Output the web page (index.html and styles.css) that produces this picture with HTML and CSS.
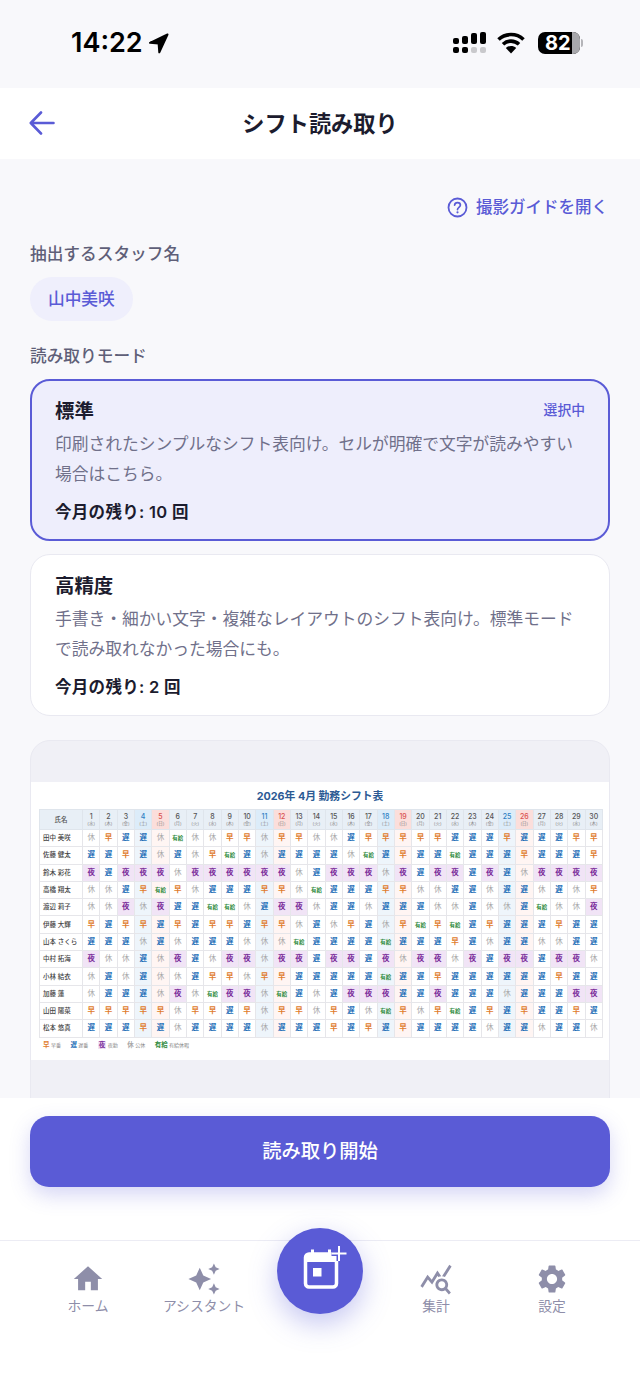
FILE: index.html
```html
<!DOCTYPE html>
<html lang="ja">
<head>
  <meta charset="UTF-8">
  <title>シフト読み取り</title>
  <link rel="stylesheet" href="styles.css">
</head>
<body>
<div class="screen">

  <!-- status bar -->
  <div class="status-bar">
    <div class="clock">14:22
      <svg class="loc" width="21" height="21" viewBox="0 0 21 21"><path d="M19.500 1.500 2 9.800l8.600.6.700 8.900z" fill="#000" stroke="#000" stroke-width="2" stroke-linejoin="round"/></svg>
    </div>
    <div class="status-icons">
      <svg width="34" height="22" viewBox="0 0 34 22">
        <g fill="#000">
          <rect x="0" y="6" width="6" height="6" rx="2"/><rect x="9" y="4" width="6" height="8" rx="2"/><rect x="18" y="1" width="6" height="11" rx="2"/><rect x="27" y="0" width="6" height="12" rx="2"/>
          <rect x="0" y="15" width="6" height="6" rx="2"/><rect x="9" y="15" width="6" height="6" rx="2"/>
        </g>
        <rect x="18" y="15" width="6" height="6" rx="2" fill="#c9c9cc"/><rect x="27" y="15" width="6" height="6" rx="2" fill="#c9c9cc"/>
      </svg>
      <svg class="wifi" width="28" height="22" viewBox="0 0 28 22">
        <path d="M1.500 7.500C8.500.9 19.500.9 26.500 7.500M6 12.300c4.600-4.300 11.400-4.300 16 0" fill="none" stroke="#000" stroke-width="3.600"/>
        <path d="M14 21.500 8.800 15.900c3-2.600 7.400-2.600 10.400 0z" fill="#000"/>
      </svg>
      <div class="battery"><span class="battery-num">82</span><i class="battery-rest"></i></div>
      <i class="battery-tip"></i>
    </div>
  </div>

  <!-- header -->
  <header class="top-bar">
    <svg class="back" width="26" height="24" viewBox="0 0 26 24"><path d="M24.500 12H2M12 1.500 1.800 12 12 22.500" fill="none" stroke="#5a5bd6" stroke-width="2.600" stroke-linecap="round" stroke-linejoin="round"/></svg>
    <h1>シフト読み取り</h1>
  </header>

  <main class="content">
    <div class="guide-row">
      <a class="guide-link">
        <svg width="21" height="21" viewBox="0 0 21 21"><circle cx="10.500" cy="10.500" r="9" fill="none" stroke="#5a5bd6" stroke-width="1.800"/><path d="M7.600 8.100c.2-1.600 1.400-2.500 2.900-2.500 1.600 0 2.900 1 2.900 2.500 0 2.300-2.900 2.300-2.900 4.500" fill="none" stroke="#5a5bd6" stroke-width="1.700" stroke-linecap="round"/><circle cx="10.500" cy="15.300" r="1.100" fill="#5a5bd6"/></svg>
        撮影ガイドを開く
      </a>
    </div>

    <div class="section-label">抽出するスタッフ名</div>
    <div class="chip">山中美咲</div>

    <div class="section-label mode-label">読み取りモード</div>

    <div class="mode-card selected">
      <div class="mode-head"><span class="mode-title">標準</span><span class="mode-state">選択中</span></div>
      <p class="mode-desc">印刷されたシンプルなシフト表向け。セルが明確で文字が読みやすい場合はこちら。</p>
      <div class="mode-left">今月の残り: 10 回</div>
    </div>

    <div class="mode-card">
      <div class="mode-head"><span class="mode-title">高精度</span></div>
      <p class="mode-desc">手書き・細かい文字・複雑なレイアウトのシフト表向け。標準モードで読み取れなかった場合にも。</p>
      <div class="mode-left">今月の残り: 2 回</div>
    </div>

    <div class="preview">
      <div class="sheet">
        <div class="sheet-title">2026年 4月 勤務シフト表</div>
        <table class="shift">
          <thead>
            <tr>
              <th class="name-col">氏名</th>
              <th>1<small>(水)</small></th><th>2<small>(木)</small></th><th>3<small>(金)</small></th><th class="sat">4<small>(土)</small></th><th class="sun">5<small>(日)</small></th><th>6<small>(月)</small></th><th>7<small>(火)</small></th><th>8<small>(水)</small></th><th>9<small>(木)</small></th><th>10<small>(金)</small></th><th class="sat">11<small>(土)</small></th><th class="sun">12<small>(日)</small></th><th>13<small>(月)</small></th><th>14<small>(火)</small></th><th>15<small>(水)</small></th><th>16<small>(木)</small></th><th>17<small>(金)</small></th><th class="sat">18<small>(土)</small></th><th class="sun">19<small>(日)</small></th><th>20<small>(月)</small></th><th>21<small>(火)</small></th><th>22<small>(水)</small></th><th>23<small>(木)</small></th><th>24<small>(金)</small></th><th class="sat">25<small>(土)</small></th><th class="sun">26<small>(日)</small></th><th>27<small>(月)</small></th><th>28<small>(火)</small></th><th>29<small>(水)</small></th><th>30<small>(木)</small></th>
            </tr>
          </thead>
          <tbody>
            <tr><td class="nm">田中 美咲</td><td class="o">休</td><td class="e">早</td><td class="l">遅</td><td class="l sa">遅</td><td class="o su">休</td><td class="p">有給</td><td class="o">休</td><td class="o">休</td><td class="e">早</td><td class="e">早</td><td class="o sa">休</td><td class="e su">早</td><td class="e">早</td><td class="o">休</td><td class="o">休</td><td class="l">遅</td><td class="e">早</td><td class="e sa">早</td><td class="e su">早</td><td class="e">早</td><td class="e">早</td><td class="l">遅</td><td class="l">遅</td><td class="l">遅</td><td class="e sa">早</td><td class="l su">遅</td><td class="l">遅</td><td class="l">遅</td><td class="e">早</td><td class="e">早</td></tr>
            <tr><td class="nm">佐藤 健太</td><td class="l">遅</td><td class="l">遅</td><td class="e">早</td><td class="l sa">遅</td><td class="o su">休</td><td class="l">遅</td><td class="o">休</td><td class="e">早</td><td class="p">有給</td><td class="l">遅</td><td class="o sa">休</td><td class="l su">遅</td><td class="l">遅</td><td class="l">遅</td><td class="l">遅</td><td class="o">休</td><td class="p">有給</td><td class="l sa">遅</td><td class="e su">早</td><td class="l">遅</td><td class="l">遅</td><td class="p">有給</td><td class="l">遅</td><td class="l">遅</td><td class="l sa">遅</td><td class="e su">早</td><td class="l">遅</td><td class="l">遅</td><td class="l">遅</td><td class="e">早</td></tr>
            <tr><td class="nm">鈴木 彩花</td><td class="n">夜</td><td class="l">遅</td><td class="n">夜</td><td class="n">夜</td><td class="n">夜</td><td class="o">休</td><td class="n">夜</td><td class="n">夜</td><td class="n">夜</td><td class="n">夜</td><td class="n">夜</td><td class="n">夜</td><td class="o">休</td><td class="l">遅</td><td class="n">夜</td><td class="n">夜</td><td class="n">夜</td><td class="o sa">休</td><td class="n">夜</td><td class="l">遅</td><td class="n">夜</td><td class="n">夜</td><td class="l">遅</td><td class="n">夜</td><td class="l sa">遅</td><td class="o su">休</td><td class="n">夜</td><td class="n">夜</td><td class="n">夜</td><td class="n">夜</td></tr>
            <tr><td class="nm">高橋 翔太</td><td class="o">休</td><td class="o">休</td><td class="l">遅</td><td class="e sa">早</td><td class="p su">有給</td><td class="e">早</td><td class="o">休</td><td class="l">遅</td><td class="l">遅</td><td class="l">遅</td><td class="e sa">早</td><td class="e su">早</td><td class="o">休</td><td class="p">有給</td><td class="l">遅</td><td class="l">遅</td><td class="l">遅</td><td class="e sa">早</td><td class="e su">早</td><td class="o">休</td><td class="o">休</td><td class="l">遅</td><td class="l">遅</td><td class="o">休</td><td class="l sa">遅</td><td class="l su">遅</td><td class="o">休</td><td class="l">遅</td><td class="o">休</td><td class="e">早</td></tr>
            <tr><td class="nm">渡辺 莉子</td><td class="o">休</td><td class="o">休</td><td class="n">夜</td><td class="o sa">休</td><td class="n">夜</td><td class="l">遅</td><td class="l">遅</td><td class="p">有給</td><td class="p">有給</td><td class="o">休</td><td class="l sa">遅</td><td class="n">夜</td><td class="n">夜</td><td class="o">休</td><td class="l">遅</td><td class="l">遅</td><td class="o">休</td><td class="l sa">遅</td><td class="l su">遅</td><td class="l">遅</td><td class="o">休</td><td class="o">休</td><td class="l">遅</td><td class="o">休</td><td class="o sa">休</td><td class="l su">遅</td><td class="p">有給</td><td class="o">休</td><td class="o">休</td><td class="n">夜</td></tr>
            <tr><td class="nm">伊藤 大輝</td><td class="e">早</td><td class="l">遅</td><td class="e">早</td><td class="e sa">早</td><td class="l su">遅</td><td class="e">早</td><td class="l">遅</td><td class="e">早</td><td class="e">早</td><td class="l">遅</td><td class="e sa">早</td><td class="e su">早</td><td class="o">休</td><td class="l">遅</td><td class="o">休</td><td class="e">早</td><td class="l">遅</td><td class="o sa">休</td><td class="e su">早</td><td class="p">有給</td><td class="e">早</td><td class="p">有給</td><td class="l">遅</td><td class="e">早</td><td class="l sa">遅</td><td class="l su">遅</td><td class="l">遅</td><td class="e">早</td><td class="l">遅</td><td class="l">遅</td></tr>
            <tr><td class="nm">山本 さくら</td><td class="l">遅</td><td class="l">遅</td><td class="l">遅</td><td class="o sa">休</td><td class="l su">遅</td><td class="o">休</td><td class="l">遅</td><td class="l">遅</td><td class="l">遅</td><td class="o">休</td><td class="o sa">休</td><td class="o su">休</td><td class="p">有給</td><td class="l">遅</td><td class="l">遅</td><td class="l">遅</td><td class="l">遅</td><td class="p sa">有給</td><td class="l su">遅</td><td class="l">遅</td><td class="l">遅</td><td class="e">早</td><td class="l">遅</td><td class="o">休</td><td class="l sa">遅</td><td class="l su">遅</td><td class="o">休</td><td class="o">休</td><td class="l">遅</td><td class="l">遅</td></tr>
            <tr><td class="nm">中村 拓海</td><td class="n">夜</td><td class="o">休</td><td class="o">休</td><td class="l sa">遅</td><td class="o su">休</td><td class="n">夜</td><td class="l">遅</td><td class="o">休</td><td class="n">夜</td><td class="n">夜</td><td class="o sa">休</td><td class="n">夜</td><td class="n">夜</td><td class="l">遅</td><td class="n">夜</td><td class="n">夜</td><td class="l">遅</td><td class="n">夜</td><td class="o su">休</td><td class="n">夜</td><td class="n">夜</td><td class="o">休</td><td class="n">夜</td><td class="l">遅</td><td class="n">夜</td><td class="n">夜</td><td class="l">遅</td><td class="n">夜</td><td class="n">夜</td><td class="o">休</td></tr>
            <tr><td class="nm">小林 結衣</td><td class="o">休</td><td class="l">遅</td><td class="o">休</td><td class="l sa">遅</td><td class="o su">休</td><td class="o">休</td><td class="l">遅</td><td class="e">早</td><td class="e">早</td><td class="o">休</td><td class="e sa">早</td><td class="e su">早</td><td class="l">遅</td><td class="l">遅</td><td class="l">遅</td><td class="l">遅</td><td class="l">遅</td><td class="p sa">有給</td><td class="l su">遅</td><td class="l">遅</td><td class="e">早</td><td class="l">遅</td><td class="l">遅</td><td class="l">遅</td><td class="l sa">遅</td><td class="l su">遅</td><td class="l">遅</td><td class="e">早</td><td class="l">遅</td><td class="l">遅</td></tr>
            <tr><td class="nm">加藤 蓮</td><td class="o">休</td><td class="l">遅</td><td class="l">遅</td><td class="l sa">遅</td><td class="o su">休</td><td class="n">夜</td><td class="o">休</td><td class="p">有給</td><td class="n">夜</td><td class="n">夜</td><td class="o sa">休</td><td class="p su">有給</td><td class="l">遅</td><td class="o">休</td><td class="l">遅</td><td class="n">夜</td><td class="n">夜</td><td class="n">夜</td><td class="l su">遅</td><td class="l">遅</td><td class="n">夜</td><td class="l">遅</td><td class="l">遅</td><td class="l">遅</td><td class="o sa">休</td><td class="l su">遅</td><td class="l">遅</td><td class="l">遅</td><td class="n">夜</td><td class="n">夜</td></tr>
            <tr><td class="nm">山田 陽菜</td><td class="e">早</td><td class="e">早</td><td class="e">早</td><td class="e sa">早</td><td class="e su">早</td><td class="o">休</td><td class="e">早</td><td class="e">早</td><td class="l">遅</td><td class="e">早</td><td class="o sa">休</td><td class="e su">早</td><td class="e">早</td><td class="o">休</td><td class="e">早</td><td class="l">遅</td><td class="o">休</td><td class="p sa">有給</td><td class="e su">早</td><td class="o">休</td><td class="e">早</td><td class="p">有給</td><td class="l">遅</td><td class="e">早</td><td class="l sa">遅</td><td class="e su">早</td><td class="l">遅</td><td class="l">遅</td><td class="e">早</td><td class="l">遅</td></tr>
            <tr><td class="nm">松本 悠真</td><td class="l">遅</td><td class="l">遅</td><td class="l">遅</td><td class="e sa">早</td><td class="l su">遅</td><td class="o">休</td><td class="l">遅</td><td class="l">遅</td><td class="l">遅</td><td class="l">遅</td><td class="o sa">休</td><td class="l su">遅</td><td class="l">遅</td><td class="l">遅</td><td class="e">早</td><td class="l">遅</td><td class="e">早</td><td class="l sa">遅</td><td class="e su">早</td><td class="l">遅</td><td class="l">遅</td><td class="l">遅</td><td class="l">遅</td><td class="o">休</td><td class="l sa">遅</td><td class="l su">遅</td><td class="o">休</td><td class="l">遅</td><td class="l">遅</td><td class="o">休</td></tr>
          </tbody>
        </table>
        <div class="legend">
          <span><b class="e">早</b> 早番</span>
          <span><b class="l">遅</b> 遅番</span>
          <span><b class="n">夜</b> 夜勤</span>
          <span><b class="o">休</b> 公休</span>
          <span><b class="p">有給</b> 有給休暇</span>
        </div>
      </div>
    </div>
  </main>

  <div class="action-bar">
    <button class="start-btn">読み取り開始</button>
  </div>

  <!-- bottom tabs -->
  <nav class="tabs">
    <div class="tab">
      <svg width="34" height="34" viewBox="0 0 24 24"><path d="M10 20v-6h4v6h5v-8h3L12 3 2 12h3v8z"/></svg>
      <span>ホーム</span>
    </div>
    <div class="tab">
      <svg width="34" height="34" viewBox="0 0 24 24"><path d="M19 9l1.250-2.750L23 5l-2.750-1.250L19 1l-1.250 2.750L15 5l2.750 1.250L19 9zm-7.500.5L9 4 6.500 9.500 1 12l5.500 2.500L9 20l2.500-5.500L17 12l-5.500-2.500zM19 15l-1.250 2.750L15 19l2.750 1.250L19 23l1.250-2.750L23 19l-2.750-1.250L19 15z"/></svg>
      <span>アシスタント</span>
    </div>
    <div class="tab tab-gap"></div>
    <div class="tab">
      <svg width="34" height="34" viewBox="0 0 24 24"><path d="M19.880 18.470c.44-.7.7-1.510.7-2.390 0-2.490-2.010-4.500-4.500-4.500s-4.500 2.010-4.500 4.500 2.010 4.500 4.490 4.500c.88 0 1.700-.26 2.390-.7L21.090 23 22.500 21.590l-2.620-3.120zm-3.800.11c-1.380 0-2.500-1.120-2.500-2.500s1.120-2.500 2.500-2.500 2.500 1.120 2.500 2.500-1.120 2.500-2.500 2.500zm-.36-8.500c-.74.02-1.450.18-2.100.45l-.55-.83-3.800 6.180-3.010-3.520-3.630 5.810L1 17l5-8 3 3.500L13 6l2.720 4.080zm2.590.5c-.64-.28-1.330-.45-2.050-.49L21.380 2 23 3.180l-4.690 7.400z"/></svg>
      <span>集計</span>
    </div>
    <div class="tab">
      <svg width="34" height="34" viewBox="0 0 24 24"><path d="M19.140 12.940c.04-.3.06-.61.06-.94 0-.32-.02-.64-.07-.94l2.030-1.580c.18-.14.23-.41.12-.61l-1.920-3.320c-.12-.22-.37-.29-.59-.22l-2.390.96c-.5-.38-1.030-.7-1.620-.94l-.36-2.540c-.04-.24-.24-.41-.48-.41h-3.840c-.24 0-.43.17-.47.41l-.36 2.540c-.59.24-1.130.57-1.620.94l-2.390-.96c-.22-.08-.47 0-.59.22L2.740 8.870c-.12.21-.08.47.12.61l2.030 1.580c-.05.3-.09.63-.09.94s.02.64.07.94l-2.030 1.580c-.18.14-.23.41-.12.61l1.920 3.320c.12.22.37.29.59.22l2.390-.96c.5.38 1.030.7 1.620.94l.36 2.54c.05.24.24.41.48.41h3.840c.24 0 .44-.17.47-.41l.36-2.540c.59-.24 1.130-.56 1.620-.94l2.390.96c.22.08.47 0 .59-.22l1.920-3.320c.12-.22.07-.47-.12-.61l-2.010-1.580zM12 15.600c-1.980 0-3.600-1.620-3.600-3.600s1.620-3.600 3.600-3.600 3.600 1.620 3.600 3.600-1.620 3.600-3.600 3.600z"/></svg>
      <span>設定</span>
    </div>
    <div class="fab">
      <svg width="48" height="54" viewBox="0 0 48 54">
        <rect x="3.500" y="11" width="31" height="33" rx="3.500" fill="none" stroke="#fff" stroke-width="3.500"/>
        <rect x="3.500" y="11" width="31" height="8" fill="#fff"/>
        <rect x="9" y="6.500" width="3" height="6" fill="#fff"/><rect x="26" y="6.500" width="3" height="6" fill="#fff"/>
        <rect x="11" y="25" width="8.500" height="8.500" fill="#fff"/>
        <path d="M37 3v15M29.500 10.500h15" stroke="#5a5bd6" stroke-width="5"/>
        <path d="M37 3v15M29.500 10.500h15" stroke="#fff" stroke-width="2"/>
      </svg>
    </div>
  </nav>
</div>
</body>
</html>
```

FILE: styles.css
```css
* {
  box-sizing: border-box;
}

body {
  margin: 0;
  background: #f8f8fb;
  font-family: "Inter", "Noto Sans CJK JP", sans-serif;
  color: #1c1c2e;
}

.screen {
  position: relative;
  width: 640px;
  height: 1387px;
  display: flex;
  flex-direction: column;
  overflow: hidden;
}

/* status bar */
.status-bar {
  height: 88px;
  flex: none;
  display: flex;
  justify-content: space-between;
  align-items: flex-start;
  padding: 25px 57px 0 71px;
}

.clock {
  display: flex;
  align-items: center;
  gap: 5px;
  font-size: 27px;
  line-height: 36px;
  font-weight: 600;
  color: #000;
}

.status-icons {
  display: flex;
  align-items: center;
  padding-top: 7px;
}

.wifi {
  margin-left: 10px;
}

.battery {
  position: relative;
  width: 42px;
  height: 22px;
  margin-left: 13px;
  background: #000;
  border-radius: 7px;
  overflow: hidden;
}

.battery-num {
  position: absolute;
  left: 7px;
  top: 0;
  color: #fff;
  font-size: 20px;
  line-height: 22px;
  font-weight: 700;
}

.battery-rest {
  position: absolute;
  right: 0;
  top: 0;
  bottom: 0;
  width: 8px;
  background: #a8a8ac;
}

.battery-tip {
  width: 2px;
  height: 8px;
  margin-left: 1px;
  background: #b4b4b8;
  border-radius: 0 2px 2px 0;
}

/* header */
.top-bar {
  position: relative;
  height: 71px;
  flex: none;
  background: #fff;
  display: flex;
  align-items: center;
  justify-content: center;
}

.top-bar h1 {
  margin: 0;
  font-size: 22.200px;
  line-height: 30px;
  font-weight: 700;
  color: #1c1c2e;
}

.back {
  position: absolute;
  left: 29px;
  top: 23px;
}

/* content */
.content {
  flex: 1;
  min-height: 0;
  overflow: hidden;
  padding: 36px 30px 0;
}

.guide-row {
  display: flex;
  justify-content: flex-end;
  padding-right: 2px;
}

.guide-link {
  display: flex;
  align-items: center;
  gap: 8px;
  font-size: 16.500px;
  line-height: 24px;
  font-weight: 500;
  color: #5a5bd6;
}

.section-label {
  margin-top: 23px;
  font-size: 16.700px;
  line-height: 24px;
  font-weight: 500;
  color: #5f5f78;
}

.mode-label {
  margin-top: 23px;
}

.chip {
  display: inline-block;
  margin-top: 11px;
  padding: 0 18px;
  height: 44px;
  line-height: 44px;
  border-radius: 22px;
  background: #efeffc;
  color: #5a5bd6;
  font-size: 16.700px;
  font-weight: 500;
}

.mode-card {
  height: 162px;
  margin-top: 13px;
  padding: 16px 24px 0;
  background: #fff;
  border: 1.500px solid #e9e9f1;
  border-radius: 20px;
}

.mode-card.selected {
  margin-top: 11px;
  background: #eeeefc;
  border: 2px solid #5a5bd6;
  padding: 15px 23px 0;
}

.mode-head {
  display: flex;
  justify-content: space-between;
  align-items: center;
  height: 26px;
}

.mode-title {
  font-size: 19.400px;
  font-weight: 700;
  color: #1c1c2e;
}

.mode-state {
  font-size: 13.800px;
  font-weight: 500;
  color: #5a5bd6;
}

.mode-desc {
  margin: 7px 0 0;
  font-size: 16.760px;
  line-height: 30px;
  color: #70708a;
}

.mode-left {
  margin-top: 10.500px;
  font-size: 16.500px;
  line-height: 24px;
  font-weight: 600;
  letter-spacing: 0.300px;
  color: #1c1c2e;
}

/* image preview */
.preview {
  margin-top: 24px;
  height: 400px;
  padding: 41px 0 0;
  background: #f0f0f6;
  border: 1px solid #e9e9f1;
  border-radius: 20px;
}

.sheet {
  height: 278px;
  background: #fff;
  padding: 4px 8px 0;
}

.sheet-title {
  height: 23px;
  text-align: center;
  font-size: 10.800px;
  line-height: 22px;
  font-weight: 700;
  color: #2c5a94;
}

.shift {
  width: 564px;
  table-layout: fixed;
  border-collapse: collapse;
}

.shift th {
  height: 20px;
  padding: 0;
  background: #e8eff6;
  border: 1px solid #dfe5ec;
  font-size: 7px;
  line-height: 8px;
  font-weight: 500;
  color: #555;
  text-align: center;
}

.shift th small {
  display: block;
  font-size: 4.500px;
  line-height: 6px;
  font-weight: 400;
  color: #888;
}

.shift th.name-col {
  width: 43px;
  font-size: 6.500px;
}

.shift th.sat {
  background: #dcecf9;
  color: #2f7fc4;
}

.shift th.sun {
  background: #fbdedb;
  color: #d9534f;
}

.shift td {
  height: 17.300px;
  padding: 0;
  border: 1px solid #e6e6ea;
  font-size: 7.500px;
  line-height: 10px;
  font-weight: 700;
  text-align: center;
  overflow: hidden;
  white-space: nowrap;
}

.shift td.nm {
  padding-left: 3px;
  font-size: 6.500px;
  font-weight: 500;
  color: #444;
  text-align: left;
}

.shift td.sa {
  background: #eef5fb;
}

.shift td.su {
  background: #fff5f3;
}

.shift td.n {
  background: #f1e4f6;
}

.e {
  color: #e07b2c;
}

.l {
  color: #1f6fb8;
}

.n {
  color: #7b2d9b;
}

.o {
  color: #a8a8a8;
  font-weight: 400;
}

.shift td.o {
  font-weight: 400;
}

.shift td.p {
  font-size: 5.500px;
  color: #2e8b3e;
}

.legend {
  display: flex;
  gap: 9.500px;
  margin-top: 3px;
  padding-left: 4px;
  font-size: 5px;
  line-height: 9px;
  color: #888;
}

.legend b {
  font-size: 6.500px;
  font-weight: 700;
}

.legend b.n {
  background: #f1e4f6;
  padding: 0 1px;
}

.legend b.p {
  color: #2e8b3e;
}

/* bottom */
.action-bar {
  position: relative;
  flex: none;
  height: 142px;
  padding: 18px 30px 0;
  background: #fff;
}

.start-btn {
  display: block;
  width: 580px;
  height: 71px;
  padding: 0 0 3px;
  border: none;
  border-radius: 19px;
  background: #5a5bd6;
  color: #fff;
  font-family: inherit;
  font-size: 19.300px;
  font-weight: 500;
  box-shadow: 0 8px 20px rgba(90, 91, 214, 0.25);
}

.tabs {
  position: relative;
  flex: none;
  height: 147px;
  padding: 21px 30px 0;
  background: #fff;
  border-top: 1.500px solid #ececf4;
  display: grid;
  grid-template-columns: repeat(5, 1fr);
  align-items: start;
}

.tab {
  display: flex;
  flex-direction: column;
  align-items: center;
}

.tab svg {
  fill: #8e8ea9;
}

.tab span {
  font-size: 13.800px;
  line-height: 20px;
  color: #8e8ea9;
}

.fab {
  position: absolute;
  left: 277px;
  top: -13px;
  width: 86px;
  height: 86px;
  border-radius: 50%;
  background: #5a5bd6;
  box-shadow: 0 10px 28px rgba(90, 91, 214, 0.35);
  display: flex;
  justify-content: center;
  align-items: center;
}

.fab svg {
  margin-left: 12px;
  margin-bottom: 2px;
}
```
